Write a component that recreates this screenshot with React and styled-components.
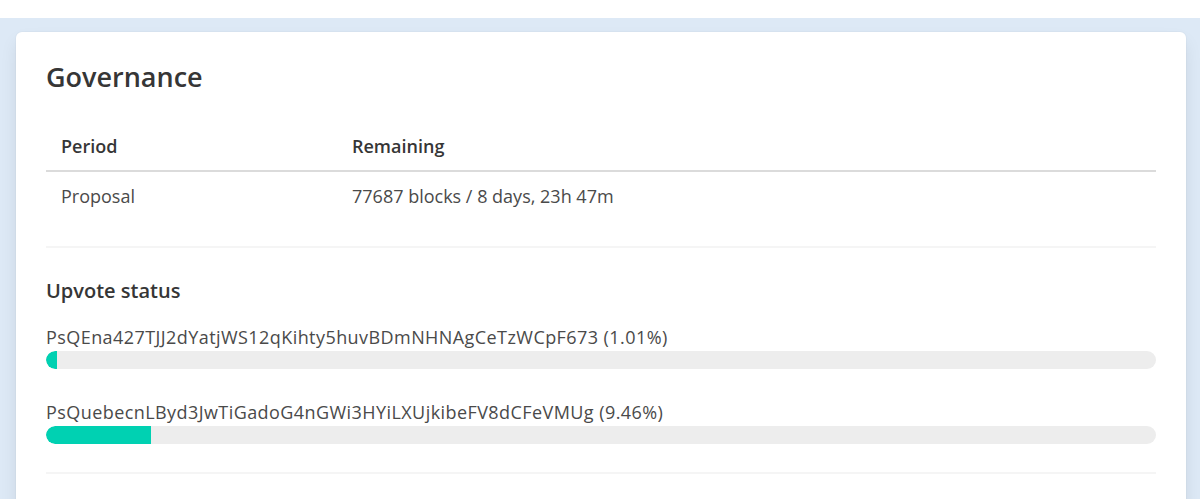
import React from "react";
import styled, { createGlobalStyle } from "styled-components";

const GlobalStyle = createGlobalStyle`
  html, body {
    margin: 0;
    padding: 0;
    background: #ffffff;
  }
  body {
    font-family: "Open Sans", "Noto Sans", sans-serif;
    color: #4a4a4a;
    font-size: 18px;
  }
`;

const Page = styled.div`
  margin-top: 18px;
  min-height: 481px;
  background: #dde9f6;
  padding: 14px 14px 0 16px;
  box-sizing: border-box;
`;

const Card = styled.section`
  background: #ffffff;
  border-radius: 6px;
  box-shadow: 0 0.5em 1em -0.125em rgba(10, 10, 10, 0.1), 0 0 0 1px rgba(10, 10, 10, 0.02);
  padding: 29px 30px 40px;
`;

const Title = styled.h1`
  margin: 0;
  font-size: 27px;
  line-height: 32px;
  font-weight: 600;
  color: #363636;
`;

const Table = styled.table`
  width: 100%;
  margin-top: 29px;
  border-collapse: collapse;
  font-size: 18px;
  color: #4a4a4a;
`;

const HeadCell = styled.th`
  text-align: left;
  font-weight: 600;
  color: #363636;
  padding: 12px 15px;
  line-height: 24px;
  border-bottom: 2px solid #dbdbdb;
  width: ${(p) => p.$width || "auto"};
`;

const Cell = styled.td`
  padding: 12px 15px;
  line-height: 24px;
`;

const Divider = styled.hr`
  border: none;
  height: 2px;
  background: #f5f5f5;
  margin: ${(p) => p.$margin};
`;

const Subtitle = styled.h2`
  margin: 0;
  font-size: 20px;
  line-height: 30px;
  font-weight: 600;
  color: #363636;
`;

const VoteList = styled.div`
  display: flex;
  flex-direction: column;
  gap: 31px;
  margin-top: 19px;
`;

const Vote = styled.div`
  display: flex;
  flex-direction: column;
  gap: 2px;
`;

const Label = styled.div`
  line-height: 24px;
  letter-spacing: 0.43px;
`;

const Track = styled.div`
  height: 18px;
  border-radius: 9px;
  background: #ededed;
  overflow: hidden;
`;

const Fill = styled.div`
  height: 100%;
  background: #00d1b2;
  border-radius: 9px 0 0 9px;
`;

const votes = [
  { hash: "PsQEna427TJJ2dYatjWS12qKihty5huvBDmNHNAgCeTzWCpF673", pct: 1.01 },
  { hash: "PsQuebecnLByd3JwTiGadoG4nGWi3HYiLXUjkibeFV8dCFeVMUg", pct: 9.46 },
];

const App = () => (
  <>
    <GlobalStyle />
    <Page>
      <Card>
        <Title>Governance</Title>
        <Table>
          <thead>
            <tr>
              <HeadCell $width="261px">Period</HeadCell>
              <HeadCell>Remaining</HeadCell>
            </tr>
          </thead>
          <tbody>
            <tr>
              <Cell>Proposal</Cell>
              <Cell>77687 blocks / 8 days, 23h 47m</Cell>
            </tr>
          </tbody>
        </Table>
        <Divider $margin="26px 0 28px" />
        <Subtitle>Upvote status</Subtitle>
        <VoteList>
          {votes.map((v) => (
            <Vote key={v.hash}>
              <Label>
                {v.hash} ({v.pct.toFixed(2)}%)
              </Label>
              <Track>
                <Fill style={{ width: `${v.pct}%` }} />
              </Track>
            </Vote>
          ))}
        </VoteList>
        <Divider $margin="28px 0 0" />
      </Card>
    </Page>
  </>
);

export default App;
